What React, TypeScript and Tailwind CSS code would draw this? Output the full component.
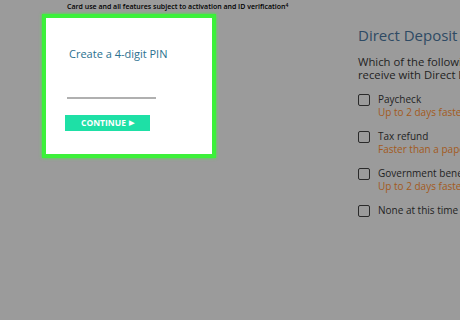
import * as React from "react";

const options = [
  { label: "Paycheck", note: "Up to 2 days faster with Direct Deposit" },
  { label: "Tax refund", note: "Faster than a paper check" },
  { label: "Government benefits", note: "Up to 2 days faster with Direct Deposit" },
  { label: "None at this time", note: "" },
];

export default function App() {
  return (
    <div
      className="w-[460px] h-[320px] overflow-hidden bg-[#9b9b9b] whitespace-nowrap"
      style={{ fontFamily: '"Open Sans", "Liberation Sans", sans-serif' }}
    >
      <div className="h-[14px] pl-[67px] pt-[3px] text-[7px] leading-[8px] font-semibold text-black">
        Card use and all features subject to activation and ID verification
        <sup className="text-[5px]">4</sup>
      </div>

      <div className="flex">
        <div className="ml-[42px] w-[174px] h-[144px] shrink-0 border-[4px] border-[#3cf03a] bg-white shadow-[0_0_3px_#3cf03a]">
          <div className="pl-[23px] pt-[29px] text-[11px] leading-[14px] text-[#2b7190]">
            Create a 4-digit PIN
          </div>
          <div className="ml-[21px] mt-[36px] w-[89px] h-[2px] bg-[#b0b0b0]" />
          <div className="ml-[19px] mt-[16px] w-[85px] h-[16px] bg-[#1ee0a6] flex items-center justify-center text-white text-[8.5px] font-bold">
            CONTINUE <span className="ml-[3px] text-[7px]">▶</span>
          </div>
        </div>

        <div className="ml-[142px] pt-[11px] shrink-0">
          <div className="text-[15px] leading-[20px] text-[#2e4a64]">Direct Deposit</div>
          <div className="mt-[10px] text-[11.3px] leading-[13px] text-[#1f1f1f]">
            <div>Which of the following will you</div>
            <div>receive with Direct Deposit?</div>
          </div>
          <div className="mt-[12px] flex flex-col gap-[11px]">
            {options.map((o) => (
              <div key={o.label} className="flex">
                <div className="w-[12px] h-[12px] mt-[1px] border-[1.5px] border-[#2a2a2a] rounded-[2px] shrink-0" />
                <div className="ml-[8px]">
                  <div className="text-[10px] leading-[13px] text-[#1f1f1f]">{o.label}</div>
                  {o.note && (
                    <div className="text-[10px] leading-[13px] text-[#a35a1c]">{o.note}</div>
                  )}
                </div>
              </div>
            ))}
          </div>
        </div>
      </div>
    </div>
  );
}
